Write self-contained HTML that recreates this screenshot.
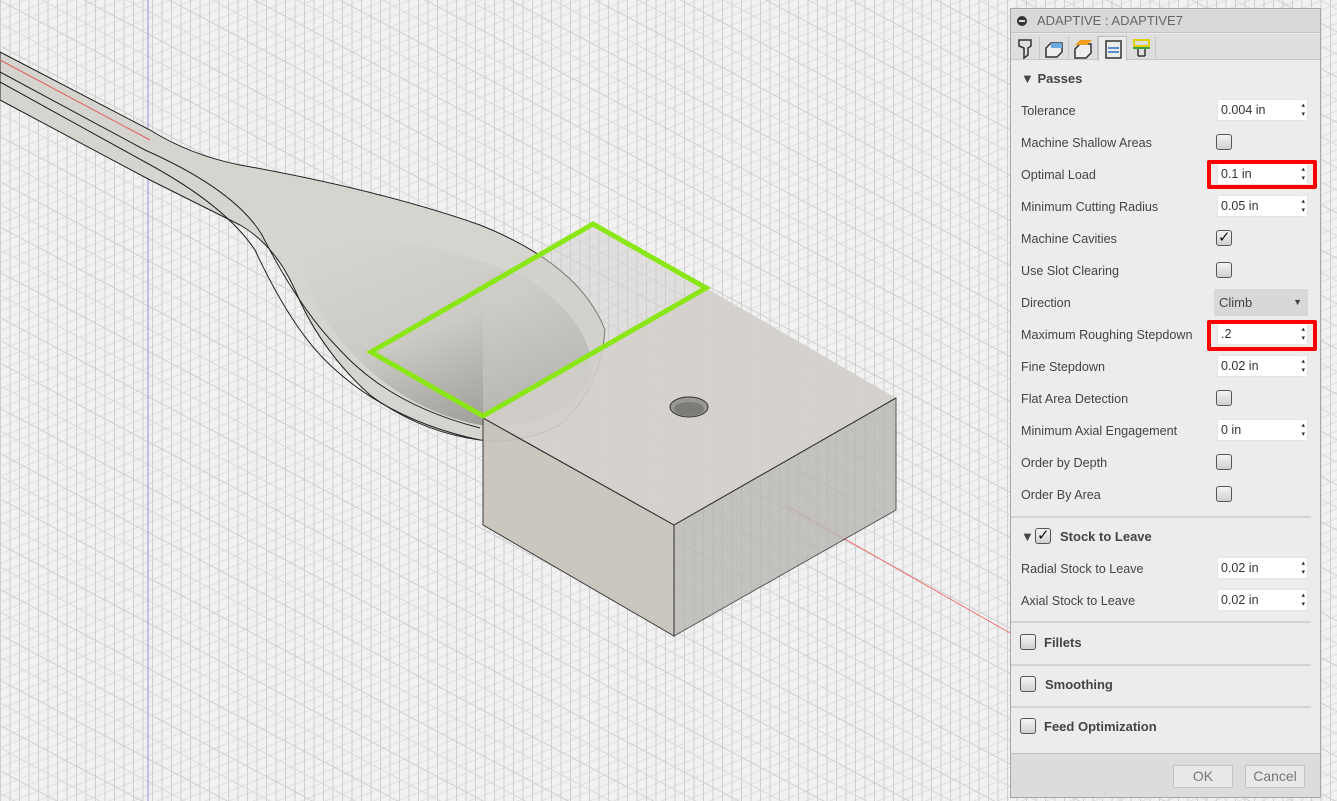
<!DOCTYPE html>
<html><head><meta charset="utf-8">
<style>
*{margin:0;padding:0;box-sizing:border-box}
body{width:1337px;height:801px;overflow:hidden;position:relative;font-family:"Liberation Sans",Arial,sans-serif;background:#efefef}
#vp{position:absolute;left:0;top:0;width:1337px;height:801px}
#panel{position:absolute;left:1010px;top:8px;width:311px;height:790px;background:#ececec;border:1px solid #a8a8a8;color:#3c3c3c;font-size:12px}
.hdr{position:absolute;left:0;top:0;width:309px;height:24px;background:#d9d9d9;border-bottom:1px solid #c4c4c4;font-size:13px;color:#666;line-height:24px;padding-left:26px}
.hdr:before{content:"";position:absolute;left:6px;top:7px;width:10px;height:10px;border-radius:50%;background:#333}
.hdr:after{content:"";position:absolute;left:8px;top:11px;width:6px;height:2px;background:#ddd}
.tabs{position:absolute;left:0;top:25px;width:309px;height:26px;background:#dedede;border-bottom:1px solid #c8c8c8}
.tab{position:absolute;top:2px;width:29px;height:24px;border-right:1px solid #c8c8c8}
.tab.act{background:#ececec;border:1px solid #c0c0c0;border-bottom:none;height:25px}
.row{position:absolute;left:10px;height:20px;line-height:20px;font-size:12.6px;color:#444}
.inp{position:absolute;left:206px;width:91px;height:22px;background:#fff;border:1px solid #e4e4e4;font-size:12.5px;line-height:20px;padding-left:3px;color:#333}
.inp:after{content:"▴\A▾";white-space:pre;position:absolute;right:2px;top:1px;font-size:7px;line-height:9px;color:#333}
.cb{position:absolute;left:205px;width:16px;height:16px;border:1px solid #555;border-radius:3px;background:linear-gradient(#f4f4f4,#d0d0d0)}
.cb.ck:after{content:"✓";position:absolute;left:1px;top:-3px;font-size:15px;color:#111}
.sec{position:absolute;left:10px;font-weight:bold;font-size:13px;color:#444}
.sep{position:absolute;left:0;width:300px;height:2px;background:#d4d4d4}
.red{position:absolute;border:4px solid #f00;border-radius:2px}
.btn{position:absolute;top:756px;height:23px;background:#e8e8e8;border:1px solid #c4c4c4;font-size:14px;color:#777;text-align:center;line-height:21px}
</style></head><body>
<svg id="vp" width="1337" height="801" viewBox="0 0 1337 801">
<defs>
<pattern id="gv" width="9.5" height="801" patternUnits="userSpaceOnUse"><rect width="1" height="801" fill="#cfcfcf"/></pattern>
<pattern id="gs" width="40" height="40" patternUnits="userSpaceOnUse" patternTransform="rotate(28)"><rect width="40" height="1" fill="#d0d0d0"/><rect width="40" height="1" y="20" fill="#dadada"/></pattern>
<pattern id="gs2" width="40" height="9" patternUnits="userSpaceOnUse" patternTransform="rotate(-22)"><rect width="40" height="1" fill="#e0e0e0"/></pattern>
<linearGradient id="bowl" x1="0" y1="0" x2="0.6" y2="1"><stop offset="0" stop-color="#d8d6d1"/><stop offset="0.55" stop-color="#c9c7c2"/><stop offset="1" stop-color="#8f8d89"/></linearGradient>
</defs>
<rect width="1337" height="801" fill="#f1f1f1"/>
<rect width="1337" height="801" fill="url(#gs2)"/>
<rect width="1337" height="801" fill="url(#gv)"/>
<rect width="1337" height="801" fill="url(#gs)"/>
<line x1="148" y1="0" x2="148" y2="801" stroke="#8f8fe0" stroke-width="1"/>
<line x1="785" y1="505" x2="1010" y2="633" stroke="#f07070" stroke-width="1"/>
<path d="M0,52 L150,130 Q190,155 240,165 Q380,190 480,225 Q580,265 605,330 Q600,390 560,425 Q520,445 480,440 Q420,432 370,395 Q320,350 295,290 Q275,245 240,225 Q200,205 150,180 L0,100 Z" fill="#d6d4cf" stroke="#222" stroke-width="1"/>
<path d="M0,72 L145,150 Q235,190 262,235 Q300,310 340,350 Q390,405 480,428" fill="none" stroke="#222" stroke-width="1"/>
<path d="M0,82 L145,162 Q225,205 255,250 Q290,325 325,360 Q385,420 480,440" fill="none" stroke="#222" stroke-width="1"/>
<path d="M0,60 L150,140" stroke="#e06060" stroke-width="1"/>
<path d="M300,240 Q420,230 530,280 Q600,330 590,380 Q560,430 480,425 Q400,410 340,340 Q300,290 300,240Z" fill="url(#bowl)" opacity="0.75"/>
<polygon points="483,418 674,525 896,398 706,288 593,225 483,290" fill="#d0cec9" opacity="0.5"/>
<polygon points="483,418 674,525 896,398 706,288" fill="#d2d0cb" opacity="0.85"/>
<polygon points="483,418 674,525 674,636 483,525" fill="#c9c5bc" opacity="0.95" stroke="#333" stroke-width="1"/>
<polygon points="674,525 896,398 896,510 674,636" fill="#b9b7b3" opacity="0.8" stroke="#333" stroke-width="1"/>
<line x1="483" y1="418" x2="674" y2="525" stroke="#333"/>
<line x1="674" y1="525" x2="896" y2="398" stroke="#333"/>
<ellipse cx="689" cy="407" rx="19" ry="10" fill="#9a9894" stroke="#333"/>
<ellipse cx="689" cy="409" rx="15" ry="7" fill="#7e7c79"/>
<polygon points="371,352 593,224 706,288 483,416" fill="none" stroke="#8ae614" stroke-width="5" stroke-linejoin="miter"/>
</svg>
<div id="panel">
<div class="hdr">ADAPTIVE : ADAPTIVE7</div>
<div class="tabs">
<div class="tab" style="left:0"><svg width="29" height="24"><path d="M8,4h12v6l-3,2v7l-4,3v-10l-5-2z" fill="#ddd" stroke="#333" stroke-width="1.5"/></svg></div>
<div class="tab" style="left:29px"><svg width="29" height="24"><path d="M6,12l5-5h11v9l-5,5h-11z" fill="#eee" stroke="#333" stroke-width="1.5"/><path d="M11,7h11v5h-11z" fill="#6aa8e0"/></svg></div>
<div class="tab" style="left:58px"><svg width="29" height="24"><path d="M6,13l5-5h11v9l-5,5h-11z" fill="#eee" stroke="#333" stroke-width="1.5"/><path d="M11,4h12l-5,5h-12z" fill="#f0a020"/></svg></div>
<div class="tab act" style="left:87px"><svg width="29" height="24"><rect x="7" y="4" width="15" height="17" fill="none" stroke="#333" stroke-width="1.5"/><rect x="9" y="10" width="11" height="2" fill="#5a8ed0"/><rect x="9" y="14" width="11" height="2" fill="#5a8ed0"/></svg></div>
<div class="tab" style="left:116px"><svg width="29" height="24"><rect x="7" y="4" width="15" height="6" fill="none" stroke="#e0d000" stroke-width="2"/><rect x="6" y="11" width="17" height="2" fill="#40a040"/><path d="M11,13v7M18,13v7M11,20h7" stroke="#333" stroke-width="1.5" fill="none"/></svg></div>
</div>
<div class="sec" style="top:62px">▼ Passes</div>
<div class="row" style="top:92px">Tolerance</div><div class="inp" style="top:90px">0.004 in</div>
<div class="row" style="top:124px">Machine Shallow Areas</div><div class="cb" style="top:125px"></div>
<div class="row" style="top:156px">Optimal Load</div><div class="inp" style="top:154px">0.1 in</div>
<div class="red" style="left:196px;top:151px;width:110px;height:29px"></div>
<div class="row" style="top:188px">Minimum Cutting Radius</div><div class="inp" style="top:186px">0.05 in</div>
<div class="row" style="top:220px">Machine Cavities</div><div class="cb ck" style="top:221px"></div>
<div class="row" style="top:252px">Use Slot Clearing</div><div class="cb" style="top:253px"></div>
<div class="row" style="top:284px">Direction</div>
<div style="position:absolute;left:203px;top:280px;width:94px;height:27px;background:#d8d8d8;font-size:13px;line-height:27px;padding-left:5px;color:#444">Climb<span style="position:absolute;right:6px;font-size:9px">▼</span></div>
<div class="row" style="top:316px">Maximum Roughing Stepdown</div><div class="inp" style="top:314px">.2</div>
<div class="red" style="left:196px;top:311px;width:110px;height:31px"></div>
<div class="row" style="top:348px">Fine Stepdown</div><div class="inp" style="top:346px">0.02 in</div>
<div class="row" style="top:380px">Flat Area Detection</div><div class="cb" style="top:381px"></div>
<div class="row" style="top:412px">Minimum Axial Engagement</div><div class="inp" style="top:410px">0 in</div>
<div class="row" style="top:444px">Order by Depth</div><div class="cb" style="top:445px"></div>
<div class="row" style="top:476px">Order By Area</div><div class="cb" style="top:477px"></div>
<div class="sep" style="top:507px"></div>
<div class="sec" style="top:520px">▼</div><div class="cb ck" style="left:24px;top:519px"></div><div class="sec" style="left:49px;top:520px">Stock to Leave</div>
<div class="row" style="top:550px">Radial Stock to Leave</div><div class="inp" style="top:548px">0.02 in</div>
<div class="row" style="top:582px">Axial Stock to Leave</div><div class="inp" style="top:580px">0.02 in</div>
<div class="sep" style="top:612px"></div>
<div class="cb" style="left:9px;top:625px"></div><div class="sec" style="left:33px;top:626px">Fillets</div>
<div class="sep" style="top:655px"></div>
<div class="cb" style="left:9px;top:667px"></div><div class="sec" style="left:34px;top:668px">Smoothing</div>
<div class="sep" style="top:697px"></div>
<div class="cb" style="left:9px;top:709px"></div><div class="sec" style="left:33px;top:710px">Feed Optimization</div>
<div style="position:absolute;left:0;top:744px;width:309px;height:44px;background:#dcdcdc;border-top:1px solid #c0c0c0"></div>
<div class="btn" style="left:162px;width:60px">OK</div>
<div class="btn" style="left:234px;width:60px">Cancel</div>
</div>
</body></html>
